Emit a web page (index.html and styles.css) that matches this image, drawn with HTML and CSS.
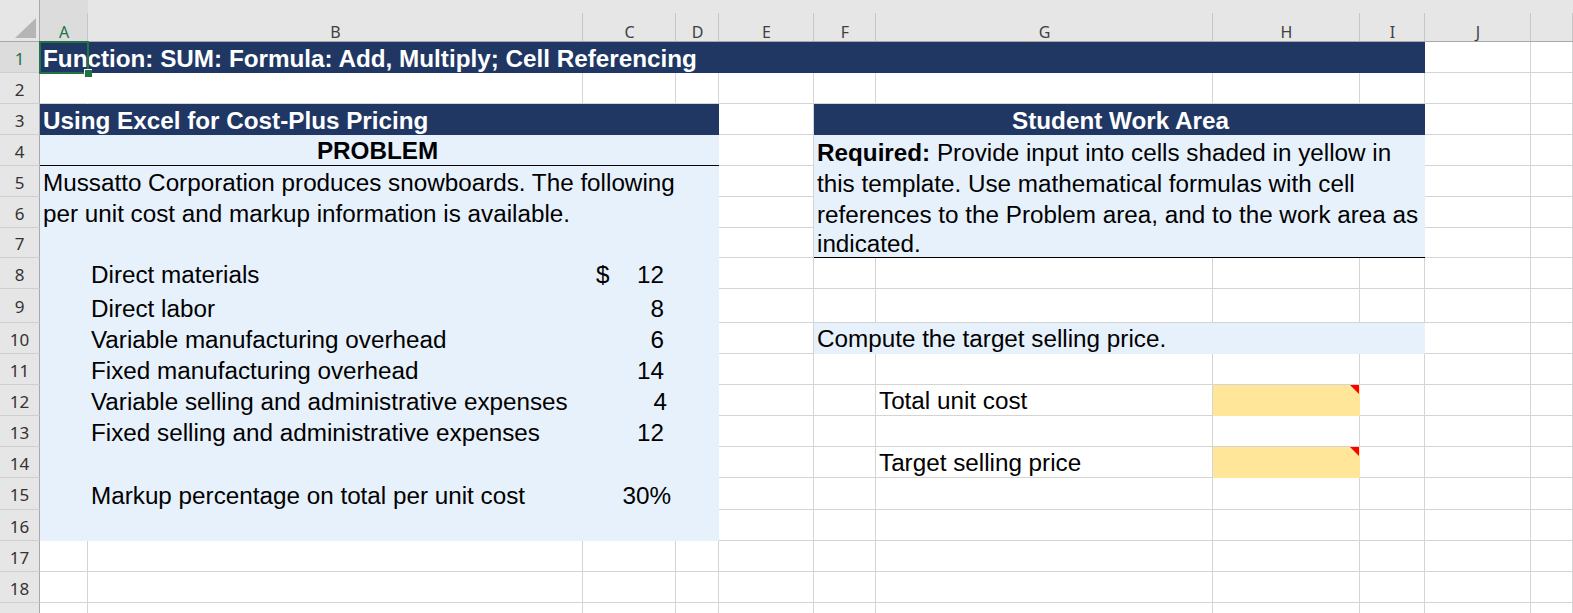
FILE: index.html
```html
<!DOCTYPE html>
<html>
<head>
<meta charset="utf-8">
<title>Cost-Plus Pricing</title>
<link rel="stylesheet" href="styles.css">
</head>
<body>
<div class="sheet">
  <div class="hd corner"><svg width="40" height="42" viewBox="0 0 40 42"><polygon points="15,38 36,38 36,18" fill="#b5b5b5"/></svg></div>
  <div class="hd on">A</div><div class="hd">B</div><div class="hd">C</div><div class="hd">D</div><div class="hd">E</div><div class="hd">F</div><div class="hd">G</div><div class="hd">H</div><div class="hd">I</div><div class="hd">J</div><div class="hd"></div>

  <div class="rh on">1</div><div class="c navy s9">Function: SUM: Formula: Add, Multiply; Cell Referencing</div><div class="c"></div><div class="c"></div>

  <div class="rh">2</div><div class="c nob"></div><div class="c"></div><div class="c"></div><div class="c"></div><div class="c"></div><div class="c"></div><div class="c"></div><div class="c"></div><div class="c"></div><div class="c"></div><div class="c"></div>

  <div class="rh">3</div><div class="c navy s4">Using Excel for Cost-Plus Pricing</div><div class="c"></div><div class="c navy s4 ctr">Student Work Area</div><div class="c"></div><div class="c"></div>

  <div class="prob">
    <div class="t all ctr b under">PROBLEM</div>
    <div class="t all">Mussatto Corporation produces snowboards. The following</div>
    <div class="t all">per unit cost and markup information is available.</div>
    <div class="t all"></div>
    <div class="t lab">Direct materials</div><div class="t val dol"><span>$</span><span>12</span></div>
    <div class="t lab">Direct labor</div><div class="t val">8</div>
    <div class="t lab">Variable manufacturing overhead</div><div class="t val">6</div>
    <div class="t lab">Fixed manufacturing overhead</div><div class="t val">14</div>
    <div class="t lab">Variable selling and administrative expenses</div><div class="t val v4">4</div>
    <div class="t lab">Fixed selling and administrative expenses</div><div class="t val">12</div>
    <div class="t all"></div>
    <div class="t lab">Markup percentage on total per unit cost</div><div class="t val pct">30%</div>
  </div>

  <div class="req">
    <div class="t"><b>Required:</b>&nbsp;Provide input into cells shaded in yellow in</div>
    <div class="t">this template. Use mathematical formulas with cell</div>
    <div class="t">references to the Problem area, and to the work area as</div>
    <div class="t">indicated.</div>
  </div>

  <div class="rh">4</div><div class="c"></div><div class="c"></div><div class="c"></div>
  <div class="rh">5</div><div class="c"></div><div class="c"></div><div class="c"></div>
  <div class="rh">6</div><div class="c"></div><div class="c"></div><div class="c"></div>
  <div class="rh">7</div><div class="c"></div><div class="c"></div><div class="c"></div>

  <div class="rh">8</div><div class="c"></div><div class="c"></div><div class="c"></div><div class="c"></div><div class="c"></div><div class="c"></div><div class="c"></div>
  <div class="rh">9</div><div class="c"></div><div class="c"></div><div class="c"></div><div class="c"></div><div class="c"></div><div class="c"></div><div class="c"></div>
  <div class="rh">10</div><div class="c"></div><div class="c blue s4">Compute the target selling price.</div><div class="c"></div><div class="c"></div>
  <div class="rh">11</div><div class="c"></div><div class="c"></div><div class="c"></div><div class="c"></div><div class="c"></div><div class="c"></div><div class="c"></div>
  <div class="rh">12</div><div class="c"></div><div class="c"></div><div class="c">Total unit cost</div><div class="c yel"></div><div class="c"></div><div class="c"></div><div class="c"></div>
  <div class="rh">13</div><div class="c"></div><div class="c"></div><div class="c"></div><div class="c"></div><div class="c"></div><div class="c"></div><div class="c"></div>
  <div class="rh">14</div><div class="c"></div><div class="c"></div><div class="c">Target selling price</div><div class="c yel"></div><div class="c"></div><div class="c"></div><div class="c"></div>
  <div class="rh">15</div><div class="c"></div><div class="c"></div><div class="c"></div><div class="c"></div><div class="c"></div><div class="c"></div><div class="c"></div>
  <div class="rh">16</div><div class="c"></div><div class="c"></div><div class="c"></div><div class="c"></div><div class="c"></div><div class="c"></div><div class="c"></div>

  <div class="rh">17</div><div class="c"></div><div class="c"></div><div class="c"></div><div class="c"></div><div class="c"></div><div class="c"></div><div class="c"></div><div class="c"></div><div class="c"></div><div class="c"></div><div class="c"></div>
  <div class="rh">18</div><div class="c"></div><div class="c"></div><div class="c"></div><div class="c"></div><div class="c"></div><div class="c"></div><div class="c"></div><div class="c"></div><div class="c"></div><div class="c"></div><div class="c"></div>
  <div class="rh"></div><div class="c"></div><div class="c"></div><div class="c"></div><div class="c"></div><div class="c"></div><div class="c"></div><div class="c"></div><div class="c"></div><div class="c"></div><div class="c"></div><div class="c"></div>

  <div class="selbox"><span class="handle"></span></div>
</div>
</body>
</html>
```

FILE: styles.css
```css
html, body {
  margin: 0;
  padding: 0;
}
body {
  width: 1573px;
  height: 613px;
  overflow: hidden;
  background: #ffffff;
  font-family: "Liberation Sans", Arial, sans-serif;
}
.sheet {
  position: relative;
  display: grid;
  grid-template-columns: 40px 48px 495px 93px 43px 95px 62px 337px 147px 65px 106px 1fr;
  grid-template-rows: 42px 31px 31px 31px 31px 31px 31px 30px 31px 34px 31px 31px 31px 31px 31px 32px 31px 31px 31px 31px;
  height: 613px;
  overflow: hidden;
}

/* column headers */
.hd {
  box-sizing: border-box;
  background-color: #e6e6e6;
  background-image: linear-gradient(#c6c6c6, #c6c6c6);
  background-size: 1px 28px;
  background-position: right bottom;
  background-repeat: no-repeat;
  border-bottom: 1px solid #a9a9a9;
  font-family: "Noto Sans", "Open Sans", sans-serif;
  font-size: 16px;
  line-height: 18px;
  color: #404040;
  display: flex;
  align-items: flex-end;
  justify-content: center;
}
.hd.on {
  color: #217346;
  background-color: #dcdcdc;
}
.corner {
  background-image: none;
  border-right: 1px solid #a9a9a9;
  display: block;
}
.corner svg {
  display: block;
}

/* row headers */
.rh {
  box-sizing: border-box;
  background: #e6e6e6;
  border-right: 1px solid #a9a9a9;
  border-bottom: 1px solid #cfcfcf;
  font-family: "Noto Sans", "Open Sans", sans-serif;
  font-size: 17px;
  color: #333333;
  display: flex;
  align-items: center;
  justify-content: center;
  padding-top: 2px;
}
.rh.on {
  color: #217346;
  background: #dcdcdc;
}

/* cells */
.c {
  box-sizing: border-box;
  border-right: 1px solid #d4d4d4;
  border-bottom: 1px solid #d4d4d4;
  background: #ffffff;
  font-size: 24.25px;
  line-height: 28px;
  display: flex;
  align-items: flex-end;
  padding-left: 3px;
  white-space: nowrap;
  color: #000000;
}
.nob {
  border-right-color: #ffffff;
}
.s9 { grid-column: span 9; }
.s4 { grid-column: span 4; }
.ctr { justify-content: center; }
.navy {
  background: #203764;
  border-color: #203764;
  color: #ffffff;
  font-weight: bold;
  line-height: 27px;
}
.blue {
  background: #e7f1fb;
  border-color: #e7f1fb;
}
.yel {
  position: relative;
  background: #ffe699;
  border-color: #ffe699;
}
.yel::after {
  content: "";
  position: absolute;
  top: 0;
  right: 0;
  border-style: solid;
  border-width: 0 9px 9px 0;
  border-color: transparent #ff0000 transparent transparent;
}

/* problem block */
.prob {
  grid-column: 2 / 6;
  grid-row: 5 / 18;
  background: #e7f1fb;
  display: grid;
  grid-template-columns: 48px 495px 93px 43px;
  grid-template-rows: 31px 31px 31px 30px 31px 34px 31px 31px 31px 31px 31px 32px 31px;
}
.t {
  box-sizing: border-box;
  font-size: 24.25px;
  line-height: 28px;
  display: flex;
  align-items: flex-end;
  padding-left: 3px;
  white-space: nowrap;
  color: #000000;
}
.all { grid-column: 1 / -1; }
.b { font-weight: bold; }
.under {
  border-bottom: 1px solid #000000;
  padding-right: 7px;
}
.lab { grid-column: 2; }
.val {
  grid-column: 3;
  justify-content: flex-end;
  padding-right: 12px;
}
.dol {
  justify-content: space-between;
  padding-left: 13px;
}
.v4 { padding-right: 9px; }
.pct { padding-right: 5px; }

/* required block */
.req {
  grid-column: 7 / 11;
  grid-row: 5 / 9;
  box-sizing: border-box;
  background: #e7f1fb;
  border-bottom: 1px solid #000000;
  display: grid;
  grid-template-rows: 31px 31px 31px 29px;
}
.req .t {
  padding-left: 3px;
  line-height: 27px;
}

/* active cell */
.selbox {
  position: absolute;
  left: 39px;
  top: 41px;
  width: 50px;
  height: 33px;
  box-sizing: border-box;
  border: 2px solid #217346;
}
.handle {
  position: absolute;
  right: -5px;
  bottom: -5px;
  width: 7px;
  height: 7px;
  background: #217346;
  border-left: 1px solid #ffffff;
  border-top: 1px solid #ffffff;
}
```
